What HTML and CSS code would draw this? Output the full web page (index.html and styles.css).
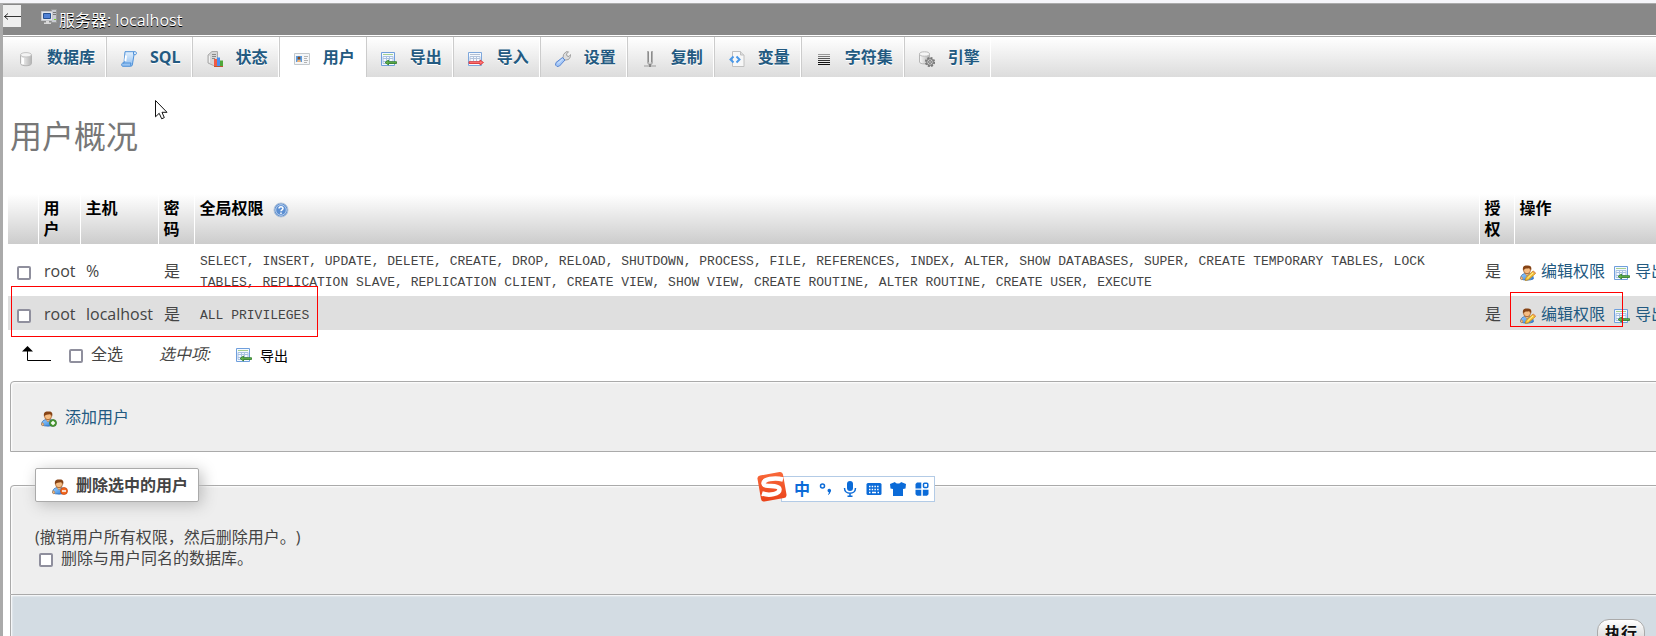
FILE: index.html
```html
<!DOCTYPE html>
<html lang="zh-CN">
<head>
<meta charset="utf-8">
<title>localhost | phpMyAdmin</title>
<link rel="stylesheet" href="styles.css">
</head>
<body>
<svg class="sprites" aria-hidden="true">
  <defs>
    <linearGradient id="metal" x1="0" x2="1" y1="0" y2="0"><stop offset="0" stop-color="#fafafa"/><stop offset="1" stop-color="#b4b4b4"/></linearGradient>
    <linearGradient id="blue" x1="0" x2="0" y1="0" y2="1"><stop offset="0" stop-color="#e4f1fd"/><stop offset="1" stop-color="#8cbcf0"/></linearGradient>
    <linearGradient id="shirt" x1="0" x2="1" y1="0" y2="1"><stop offset="0" stop-color="#9bd0ff"/><stop offset="1" stop-color="#2b7cd8"/></linearGradient>
    <linearGradient id="orange" x1="0" x2="0" y1="0" y2="1"><stop offset="0" stop-color="#f9693a"/><stop offset="1" stop-color="#ea431a"/></linearGradient>
  </defs>
  <symbol id="i-server" viewBox="0 0 16 16">
    <path d="M10.500.5h5v13h-5z" fill="#c9ccd2" stroke="#999"/><path d="M12 3.500h3M12 5.500h3" stroke="#777"/><path d="M13 10h2v1h-2z" fill="#7ad030"/>
    <path d="M.5 2.500h11v9H.5z" fill="#e4e6ea" stroke="#c4c6ca"/><path d="M2.500 4.500h7v5h-7z" fill="#4f81d6" stroke="#27508f"/><path d="M5 12h3v1.500h2V15H3v-1.500h2z" fill="#d8d8d8"/>
  </symbol>
  <symbol id="i-db" viewBox="0 0 16 16">
    <path d="M2.500 4v8.500c0 3 11 3 11 0V4z" fill="url(#metal)" stroke="#b4b4b4"/><ellipse cx="8" cy="3.800" rx="5.500" ry="2.200" fill="#f4f4f4" stroke="#c4c4c4"/><path d="M5 7v6" stroke="#fff" stroke-width="2"/>
  </symbol>
  <symbol id="i-sql" viewBox="0 0 16 16">
    <path d="M4 .7h10c2 0 2 3 0 3h-1L11.500 13c-.3 2-1 2.300-2 2.300H2C0 15.300.3 12 2 12h1z" fill="url(#blue)" stroke="#4f91d8"/><path d="M2 12h8c-1 1.500 0 3 0 3M12.500 1v2.700" fill="none" stroke="#4f91d8"/><path d="M5 4.500 4.300 10" stroke="#fff" stroke-width="2"/>
  </symbol>
  <symbol id="i-status" viewBox="0 0 16 16">
    <path d="M1 4 5 .5h5.500V13l-4 1.500L1 12z" fill="#d6d6d6" stroke="#aaa"/><path d="M5 3.500h4M5 5.500h4M5 7.500h3" stroke="#8a8a8a"/><path d="M2.500 5v6.500" stroke="#f2f2f2"/>
    <path d="M7 8h3v7H7z" fill="#f25b43"/><path d="M10 6.500h3V15h-3z" fill="#498ff0"/><path d="M13 9.500h3V15h-3z" fill="#4fa83a"/><path d="M7 15.500h9" stroke="#b53"/>
  </symbol>
  <symbol id="i-card" viewBox="0 0 16 16">
    <path d="M.5 2.500h15v11H.5z" fill="#f4f6f8" stroke="#c3c8cc"/><path d="M2 5h6v6H2z" fill="#5a9be0"/><circle cx="5" cy="7" r="1.500" fill="#8a4c1b"/><path d="M3 11c0-3 4-3 4 0z" fill="#f0b273"/><path d="M10 5.500h4M10 7.500h3M10 9.500h4M10 11.500h3" stroke="#b4b4b4"/>
  </symbol>
  <symbol id="i-export" viewBox="0 0 16 16">
    <path d="M.5 1.500h13v13H.5z" fill="#f5f9ff" stroke="#6f9fdc"/><path d="M2 3.500h10" stroke="#a5cf90"/><path d="M2 5.500h10v7H2zM2 7.500h10M2 10.500h10M5.500 5.500v7M8.500 5.500v7" fill="none" stroke="#a9c2e2"/>
    <path d="M4 11.500 7.500 9v1.700h8v1.800h-8V14z" fill="#63b04a" stroke="#2a7a24" stroke-width=".8"/>
  </symbol>
  <symbol id="i-import" viewBox="0 0 16 16">
    <path d="M.5 1.500h13v13H.5z" fill="#f5f9ff" stroke="#7fa8dc"/><path d="M2 3.500h10" stroke="#b5bfd0"/><path d="M2 5.500h10v7H2zM2 7.500h10M2 10.500h10M5.500 5.500v7M8.500 5.500v7" fill="none" stroke="#b4c4dc"/>
    <path d="M15.500 11.500 12 9v1.700H1v1.800h11V14z" fill="#f77" stroke="#dd2a2a" stroke-width=".8"/>
  </symbol>
  <symbol id="i-wrench" viewBox="0 0 16 16">
    <path d="m8 7 .5-3.500L11 .8h2.500L11.500 3l.5 2 2 .5 1.700-2v2L13.500 8.500 11 9H9.500z" fill="#ddd" stroke="#999" stroke-width=".9"/><path d="M7.500 6.500 10 9l-5.500 6-2.500.5L.5 14 1 11.500z" fill="#a5c8f8" stroke="#5b86d0"/><path d="M3 12.500 7.500 8" stroke="#dcecff"/>
  </symbol>
  <symbol id="i-repl" viewBox="0 0 16 16">
    <path d="M5 0h2v11l1 2.500L9 11V0h2v12l-1.500 2h-3L5 12z" fill="#b0b0b0"/><path d="M6.500 1v10M9.500 1v10" stroke="#8c8c8c"/><path d="M2 15h12" stroke="#b4b4b4" stroke-width="1.500"/><path d="M7 13h2v3H7z" fill="#888"/>
  </symbol>
  <symbol id="i-vars" viewBox="0 0 16 16">
    <path d="M3.500.5h8l3.500 3.500v11.500H3.500z" fill="#f7f7f7" stroke="#c0c0c0"/><path d="M11.500.5V4H15" fill="#ddd" stroke="#c0c0c0"/><path d="M4.500 5.500 1.500 8.500l3 3M7.500 5.500l3 3-3 3" fill="none" stroke="#4a98e8" stroke-width="2"/>
  </symbol>
  <symbol id="i-charset" viewBox="0 0 16 16">
    <path d="M2 3.500h12" stroke="#999"/><path d="M2 5.500h12" stroke="#777"/><path d="M2 7.500h12" stroke="#555"/><path d="M2 9.500h12" stroke="#333"/><path d="M2 11.500h12M2 13.500h12" stroke="#111"/>
  </symbol>
  <symbol id="i-engine" viewBox="0 0 16 16">
    <path d="M.5 3v8c0 2.500 10 2.500 10 0V3z" fill="url(#metal)" stroke="#b5b5b5"/><ellipse cx="5.500" cy="3" rx="5" ry="2.200" fill="#f6f6f6" stroke="#bbb"/>
    <circle cx="11" cy="11" r="4.200" fill="#bbb" stroke="#777" stroke-width="1.800" stroke-dasharray="2 1.300"/><circle cx="11" cy="11" r="3.300" fill="#ccc" stroke="#777"/><circle cx="11" cy="11" r="1.300" fill="#fff" stroke="#666"/>
  </symbol>
  <symbol id="i-help" viewBox="0 0 16 16">
    <circle cx="8" cy="8" r="7" fill="#5d8fd0" stroke="#b4c4d8"/><circle cx="8" cy="8" r="5.300" fill="#5c8fd2" stroke="#b9d0ee"/><path d="M6 6.500c0-2.500 4-2.500 4 0C10 8 8 7.800 8 9.300M8 10.500V12" fill="none" stroke="#fff" stroke-width="1.500"/>
  </symbol>
  <symbol id="i-person" viewBox="0 0 16 16">
    <path d="M.7 14c-.4-3 1.300-5 4.300-5.500h4c3 .5 4.700 2.500 4.300 5.500-3 1.500-9.500 1.500-12.600 0z" fill="url(#shirt)" stroke="#2a66ad" stroke-width=".7"/><path d="M1 11.500 3 13l-1 2-1.500-1zM5 8.500l2 2.500 2-2.500z" fill="#f5c18a" stroke="#b87332" stroke-width=".5"/>
    <circle cx="7" cy="5.200" r="3.500" fill="#f6bd83" stroke="#9b5420" stroke-width=".7"/><path d="M3 5.500C2 .3 5.500.5 8 .5c3 0 4 2 3 5-1-1.500-1-2-2-2.200C6.500 3.800 4.500 3.300 3 5.500z" fill="#864315"/>
  </symbol>
  <symbol id="i-edit" viewBox="0 0 16 16">
    <use href="#i-person"/><path d="m6 12.500 7-6.500 2.500 2.500-7 6.200-3.200.8z" fill="#f8c637" stroke="#c98a1c" stroke-width=".8"/><path d="m7.500 13 6-5.500" stroke="#fff0a0"/><path d="m13 6 2.500 2.500" stroke="#e09055" stroke-width="1.500"/>
  </symbol>
  <symbol id="i-add" viewBox="0 0 16 16"><use href="#i-person"/><circle cx="12" cy="12" r="3.500" fill="#53a03b" stroke="#286c20" stroke-width=".7"/><path d="M10 12h4M12 10v4" stroke="#fff" stroke-width="1.500"/></symbol>
  <symbol id="i-del" viewBox="0 0 16 16"><use href="#i-person"/><circle cx="12" cy="12" r="3.500" fill="#f46a1f" stroke="#bd3d0b" stroke-width=".7"/><path d="M10 12h4" stroke="#fff" stroke-width="1.500"/></symbol>
</svg>

<div class="frame">
  <header class="serverbar">
    <button class="collapse" type="button" aria-label="隐藏面板"><svg width="18" height="22" viewBox="0 0 18 22"><path d="M1 11.500h17M5 8.500 1.500 11.500l3.500 3" fill="none" stroke="#333"/></svg></button>
    <a class="server" href="#"><svg class="icon"><use href="#i-server"/></svg><span class="server-name">服务器: localhost</span></a>
  </header>

  <nav class="tabs">
    <a class="tab" href="#"><svg class="icon"><use href="#i-db"/></svg>数据库</a>
    <a class="tab" href="#"><svg class="icon"><use href="#i-sql"/></svg>SQL</a>
    <a class="tab" href="#"><svg class="icon"><use href="#i-status"/></svg>状态</a>
    <a class="tab active" href="#"><svg class="icon"><use href="#i-card"/></svg>用户</a>
    <a class="tab" href="#"><svg class="icon"><use href="#i-export"/></svg>导出</a>
    <a class="tab" href="#"><svg class="icon"><use href="#i-import"/></svg>导入</a>
    <a class="tab" href="#"><svg class="icon"><use href="#i-wrench"/></svg>设置</a>
    <a class="tab" href="#"><svg class="icon"><use href="#i-repl"/></svg>复制</a>
    <a class="tab" href="#"><svg class="icon"><use href="#i-vars"/></svg>变量</a>
    <a class="tab" href="#"><svg class="icon"><use href="#i-charset"/></svg>字符集</a>
    <a class="tab" href="#"><svg class="icon"><use href="#i-engine"/></svg>引擎</a>
  </nav>

  <main class="content">
    <h1 class="title">用户概况</h1>

    <table class="users">
      <colgroup><col class="c-check"><col class="c-user"><col class="c-host"><col class="c-pass"><col><col class="c-grant"><col class="c-ops"></colgroup>
      <thead>
        <tr><th></th><th>用户</th><th>主机</th><th>密码</th><th>全局权限 <svg class="icon help"><use href="#i-help"/></svg></th><th>授权</th><th>操作</th></tr>
      </thead>
      <tbody>
        <tr>
          <td class="pick"><input class="check" type="checkbox" id="u1" aria-label="root@%"></td><td><label for="u1">root</label></td><td>%</td><td>是</td>
          <td><code class="privs">SELECT, INSERT, UPDATE, DELETE, CREATE, DROP, RELOAD, SHUTDOWN, PROCESS, FILE, REFERENCES, INDEX, ALTER, SHOW DATABASES, SUPER, CREATE TEMPORARY TABLES, LOCK<br>TABLES, REPLICATION SLAVE, REPLICATION CLIENT, CREATE VIEW, SHOW VIEW, CREATE ROUTINE, ALTER ROUTINE, CREATE USER, EXECUTE</code></td>
          <td>是</td>
          <td><div class="ops"><a class="op" href="#"><svg class="icon"><use href="#i-edit"/></svg>编辑权限</a><a class="op" href="#"><svg class="icon"><use href="#i-export"/></svg>导出</a></div></td>
        </tr>
        <tr class="even">
          <td class="pick"><input class="check" type="checkbox" id="u2" aria-label="root@localhost"></td><td><label for="u2">root</label></td><td>localhost</td><td>是</td>
          <td><code class="privs">ALL PRIVILEGES</code></td>
          <td>是</td>
          <td><div class="ops"><a class="op" href="#"><svg class="icon"><use href="#i-edit"/></svg>编辑权限</a><a class="op" href="#"><svg class="icon"><use href="#i-export"/></svg>导出</a></div></td>
        </tr>
      </tbody>
    </table>

    <div class="bulk">
      <svg class="arrow" width="30" height="16" viewBox="0 0 30 16"><path d="M5.500 2v12.500H29" fill="none" stroke="#000"/><path d="M0 5.500 5.500 0 11 5.500z"/></svg>
      <input class="check" type="checkbox" id="all"><label class="all-label" for="all">全选</label>
      <i class="with">选中项:</i>
      <button class="bulk-export" type="button"><svg class="icon"><use href="#i-export"/></svg>导出</button>
    </div>

    <section class="box add-box">
      <a class="add" href="#"><svg class="icon"><use href="#i-add"/></svg>添加用户</a>
    </section>

    <fieldset class="box del-box">
      <legend class="legend"><svg class="icon"><use href="#i-del"/></svg>删除选中的用户</legend>
      <p class="note">(撤销用户所有权限，然后删除用户。)</p>
      <div class="drop"><input class="check" type="checkbox" id="drop"><label for="drop">删除与用户同名的数据库。</label></div>
    </fieldset>
    <div class="footer"><button class="go" type="button">执行</button></div>
  </main>
</div>

<div class="mark mark-row"></div>
<div class="mark mark-edit"></div>
<svg class="cursor" width="14" height="20" viewBox="0 0 14 20"><path d="M.5.500v16.300l3.700-3.500 2.500 5.500 2.600-1.200L7 12.300h5z" fill="#fff" stroke="#111"/></svg>

<div class="ime">
  <svg class="ime-logo" width="32" height="32" viewBox="0 0 32 32"><path d="M4 4.500 23.500 1q3-.5 3.500 2.500l3.500 20q.4 3-2.500 3.500L8.500 30.500q-3 .5-3.500-2.500L1.500 8q-.5-3 2.500-3.500z" fill="url(#orange)"/><path d="M27 8.500C18 6 7 8.500 7.500 12.500c.5 4.500 16 .5 16 6 0 4.500-10 6.500-17.500 4" fill="none" stroke="#fff" stroke-width="4.500"/></svg>
  <div class="ime-bar">
    <span class="ime-zh">中</span>
    <svg width="16" height="16" viewBox="0 0 16 16"><circle cx="4.500" cy="5" r="2" fill="none" stroke="#0b6bd8" stroke-width="1.500"/><path d="M9.500 9.500a1.800 1.800 0 1 1 3 1.500q-.3 2-2.500 3v-1q1-.5 1-1.500-1.500-.3-1.500-2z" fill="#0b6bd8"/></svg>
    <svg width="16" height="16" viewBox="0 0 16 16"><rect x="5" y="0" width="6" height="10" rx="3" fill="#0b6bd8"/><path d="M2.500 7c0 7 11 7 11 0M8 12v3M5.500 15.200h5" fill="none" stroke="#0b6bd8" stroke-width="1.500"/></svg>
    <svg width="16" height="16" viewBox="0 0 16 16"><rect x=".5" y="2" width="15" height="12" rx="1.500" fill="#0b6bd8"/><path d="M3 5.500h10M3 8.500h10" stroke="#fff" stroke-width="1.500" stroke-dasharray="1.500 1.200"/><path d="M3 11.500h1.500M6 11.500h4M11.500 11.500H13" stroke="#fff" stroke-width="1.300"/></svg>
    <svg width="16" height="16" viewBox="0 0 16 16"><path d="M5 1c1 2 5 2 6 0l5 2-.5 4.500L13 8v7H3V8L.5 7.500 0 3z" fill="#0b6bd8"/></svg>
    <svg width="16" height="16" viewBox="0 0 16 16"><path d="M3 1.500h4.300v6H1.500V3zM1.500 8.800h5.800v6H3l-1.500-1.500zM8.800 8.800h5.700v4.500L13 14.800H8.800z" fill="#0b6bd8"/><rect x="9.500" y="2.300" width="4.300" height="4.300" rx="1" fill="none" stroke="#0b6bd8" stroke-width="1.500"/></svg>
  </div>
</div>
</body>
</html>
```
FILE: styles.css
```css
html {
  height: 100%;
  overflow: hidden;
}

body {
  margin: 0;
  height: 100%;
  padding-top: 3px;
  box-sizing: border-box;
  background: #f5f5f9;
  color: #444;
  font: 16px/21px "Open Sans", "Noto Sans CJK SC", sans-serif;
  text-spacing-trim: space-all;
}

.sprites {
  position: absolute;
  width: 0;
  height: 0;
}

a {
  color: #235a81;
  text-decoration: none;
}

.icon {
  width: 16px;
  height: 16px;
  flex: none;
}

.check {
  appearance: none;
  flex: none;
  box-sizing: border-box;
  width: 14px;
  height: 14px;
  margin: 0;
  border: 2px solid #8f8f9d;
  border-radius: 2px;
  background: #fff;
}

.frame {
  min-height: 100%;
  border-left: 3px solid #aaa;
  background: #fff;
}

.serverbar {
  display: flex;
  align-items: flex-start;
  gap: 20px;
  height: 32px;
  border-top: 1px solid #aaa;
  box-sizing: border-box;
  background: #888;
}

.collapse {
  display: flex;
  margin: 1px 0 0;
  padding: 0;
  border: 0;
  background: #eee;
}

.server {
  display: flex;
  gap: 2px;
  padding-top: 5px;
  color: #fff;
  text-shadow: 0 1px 0 #000;
}

.server-name {
  padding-top: 1px;
}

.tabs {
  display: flex;
  height: 41px;
  margin-top: 1px;
  border-top: 1px solid #aaa;
  box-sizing: border-box;
  background: linear-gradient(#fff, #dcdcdc);
}

.tab {
  display: flex;
  align-items: center;
  gap: 13px;
  padding: 1px 10px 0 14px;
  border-left: 1px solid #ccc;
  border-right: 1px solid #fff;
  font-weight: bold;
  text-shadow: 0 1px 0 #fff;
}

.tab:first-child {
  padding-left: 15px;
  border-left: 0;
}

.tab .icon {
  margin-top: 3px;
}

.tab.active {
  background: #fff;
}

.content {
  padding-left: 5px;
  overflow: hidden;
}

.title {
  margin: 36px 0 35px 2px;
  color: #777;
  font-size: 32px;
  font-weight: normal;
  line-height: 46px;
}

.users {
  width: calc(100% + 18px);
  table-layout: fixed;
  border-collapse: collapse;
}

.c-check { width: 30px; }
.c-user { width: 42px; }
.c-host { width: 78px; }
.c-pass { width: 36px; }
.c-grant { width: 35px; }
.c-ops { width: 160px; }

.users thead {
  background: linear-gradient(#fff, #ccc);
}

.users th {
  padding: 4px 9px 4px 5px;
  border-left: 1px solid #fff;
  color: #000;
  text-align: left;
  vertical-align: top;
}

.users th:first-child {
  border-left: 0;
}

.users td {
  padding: 6px 0 3px 6px;
}

.users .pick {
  padding: 5px 0 0 9px;
}

.pick .check {
  display: block;
}

.users .even {
  height: 34px;
  background: #dfdfdf;
}

.help {
  margin-left: 5px;
  vertical-align: -4px;
}

.privs {
  display: block;
  padding-top: 1px;
  font: 13px/21px "Liberation Mono", monospace;
  white-space: nowrap;
}

.ops {
  display: flex;
  gap: 9px;
}

.op {
  display: flex;
  align-items: center;
  gap: 5px;
  white-space: nowrap;
}

.op .icon {
  margin-top: 3px;
}

.bulk {
  display: flex;
  align-items: center;
  height: 48px;
  padding-left: 14px;
}

.arrow {
  margin-right: 17px;
}

.bulk .check {
  margin-top: 3px;
}

.all-label {
  margin: 0 36px 0 8px;
}

.bulk-export {
  display: flex;
  align-items: center;
  gap: 8px;
  margin-left: 25px;
  padding: 2px 0 0;
  border: 0;
  background: none;
  color: #000;
  font: 14px "Open Sans", "Noto Sans CJK SC", sans-serif;
}

.box {
  margin: 0 -20px 0 2px;
  border: 1px solid #aaa;
  border-radius: 4px 4px 0 0;
  background: #eee;
  box-shadow: inset 1px 1px 2px #fff;
}

.add-box {
  margin-top: 3px;
  padding: 25px 30px 23px;
}

.add {
  display: flex;
  align-items: center;
  gap: 8px;
}

.add .icon {
  margin-top: 3px;
}

.del-box {
  margin-top: 16px;
  padding: 25px 24px 25px;
}

.legend {
  display: flex;
  align-items: center;
  gap: 8px;
  padding: 6px 10px 5px 16px;
  border: 1px solid #aaa;
  border-radius: 2px;
  background: #fff;
  box-shadow: 3px 3px 15px #bbb;
  font-weight: bold;
}

.legend .icon {
  margin-top: 3px;
}

.note {
  margin: 0;
}

.drop {
  display: flex;
  align-items: center;
  gap: 8px;
  padding-left: 4px;
}

.drop .check {
  margin-top: 3px;
}

.footer {
  display: flex;
  justify-content: flex-end;
  margin: 0 -20px 0 2px;
  padding: 24px 30px 24px 0;
  border: 1px solid #aaa;
  border-top: 0;
  background: #d3dce3;
  box-shadow: inset 1px 1px 2px #fff;
}

.go {
  padding: 3px 7px;
  border: 1px solid #aaa;
  border-radius: 12px;
  background: linear-gradient(#fff, #ccc);
  color: #111;
  font: bold 16px/21px "Open Sans", "Noto Sans CJK SC", sans-serif;
  text-shadow: 0 1px 0 #fff;
}

/* Annotations and floating items above the page */
.mark {
  position: absolute;
  box-sizing: border-box;
  border: 1px solid #f00;
  pointer-events: none;
}

.mark-row {
  left: 11px;
  top: 286px;
  width: 307px;
  height: 51px;
}

.mark-edit {
  right: 33px;
  top: 292px;
  width: 113px;
  height: 35px;
}

.cursor {
  position: absolute;
  left: 155px;
  top: 100px;
}

.ime {
  position: absolute;
  left: 756px;
  top: 471px;
  display: flex;
  align-items: center;
}

.ime-logo {
  z-index: 1;
  margin-right: -7px;
}

.ime-bar {
  display: flex;
  align-items: center;
  gap: 8px;
  margin-top: 3px;
  padding: 4px 4px 4px 12px;
  border: 1px solid #b3cbe6;
  background: #fff;
}

.ime-zh {
  color: #0b6bd8;
  font-size: 16px;
  font-weight: bold;
  line-height: 16px;
}
```
